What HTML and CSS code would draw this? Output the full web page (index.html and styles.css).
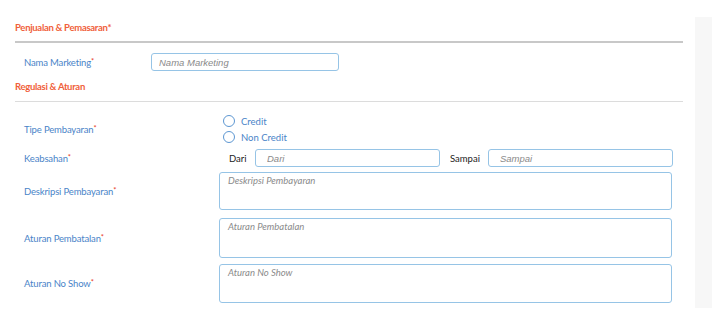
FILE: index.html
```html
<!DOCTYPE html>
<html>
<head>
<meta charset="utf-8">
<link rel="stylesheet" href="styles.css">
</head>
<body>
<div class="page">
  <div class="form">
    <div class="heading heading-main">Penjualan &amp; Pemasaran*</div>
    <div class="row row-nama">
      <label class="label label-short">Nama Marketing<span class="req">*</span></label>
      <input class="input input-nama" type="text" placeholder="Nama Marketing">
    </div>
    <div class="heading heading-sub">Regulasi &amp; Aturan</div>

    <div class="row row-tipe">
      <label class="label">Tipe Pembayaran<span class="req">*</span></label>
      <div class="radios">
        <div class="radio"><span class="circle"></span>Credit</div>
        <div class="radio"><span class="circle"></span>Non Credit</div>
      </div>
    </div>

    <div class="row row-keab">
      <label class="label">Keabsahan<span class="req">*</span></label>
      <div class="range">
        <span class="range-label">Dari</span>
        <input class="input input-dari" type="text" placeholder="Dari">
        <span class="range-label range-label-sampai">Sampai</span>
        <input class="input input-sampai" type="text" placeholder="Sampai">
      </div>
    </div>

    <div class="row row-desk">
      <label class="label">Deskripsi Pembayaran<span class="req">*</span></label>
      <textarea class="area area-desk" placeholder="Deskripsi Pembayaran"></textarea>
    </div>

    <div class="row row-batal">
      <label class="label">Aturan Pembatalan<span class="req">*</span></label>
      <textarea class="area area-batal" placeholder="Aturan Pembatalan"></textarea>
    </div>

    <div class="row row-noshow">
      <label class="label">Aturan No Show<span class="req">*</span></label>
      <textarea class="area area-noshow" placeholder="Aturan No Show"></textarea>
    </div>
  </div>
  <div class="side"></div>
</div>
</body>
</html>
```

FILE: styles.css
```css
* { box-sizing: border-box; }
html, body { margin: 0; padding: 0; background: #ffffff; }
body { font-family: Lato, "Open Sans", sans-serif; font-size: 10px; color: #333; }

.page { display: flex; width: 712px; height: 317px; }

.form { width: 668px; margin-left: 15px; display: flex; flex-direction: column; }

.side { width: 17px; margin-left: 12px; margin-top: 17px; height: 291px; background: #f7f7f7; }

.heading { color: #f0603a; font-weight: 700; font-size: 9.5px; line-height: 16px; letter-spacing: -0.3px; }
.heading-main { margin-top: 20px; padding-bottom: 5px; border-bottom: 2px solid #c8c8c8; }
.heading-sub { margin-top: 8px; padding-bottom: 6px; border-bottom: 1px solid #dcdcdc; }

.row { display: flex; align-items: center; }
.label { color: #4a84c8; font-size: 9.5px; padding-left: 9px; width: 204px; flex: none; letter-spacing: -0.15px; }
.label-short { width: 136px; }
.req { color: #e8402a; font-size: 7.5px; vertical-align: top; }

.input, .area {
  border: 1px solid #96c4e6;
  border-radius: 3px;
  background: #fff;
  outline: none;
  color: #555;
}
.input { height: 18px; padding: 0 0 0 7px; font-family: "Liberation Sans", Arial, sans-serif; font-size: 9.5px; }
.input::placeholder { color: #8a8a8a; font-style: italic; }

.row-nama { margin-top: 10px; }
.input-nama { width: 188px; }

.row-tipe { margin-top: 11px; }
.radios { display: flex; flex-direction: column; }
.radio { display: flex; align-items: center; height: 16px; color: #4a84c8; font-size: 9.5px; margin-left: 4px; }
.circle { width: 12px; height: 12px; border: 1px solid #5d97d2; border-radius: 50%; margin-right: 6px; flex: none; }

.row-keab { margin-top: 4px; }
.range { display: flex; align-items: center; margin-left: 10px; }
.range-label { color: #222; font-size: 9.5px; width: 26px; }
.range-label-sampai { width: 38px; margin-left: 10px; }
.input-dari { width: 185px; padding-left: 11px; }
.input-sampai { width: 185px; padding-left: 11px; }

.area {
  width: 453px;
  resize: none;
  padding: 2px 8px;
  font-family: Lato, sans-serif;
  font-size: 9.5px;
  display: block;
}
.area::placeholder { color: #8a8a8a; font-style: italic; }

.row-desk { margin-top: 5px; }
.area-desk { height: 38px; }
.row-batal { margin-top: 8px; }
.area-batal { height: 40px; }
.row-noshow { margin-top: 6px; }
.area-noshow { height: 39px; }
```
